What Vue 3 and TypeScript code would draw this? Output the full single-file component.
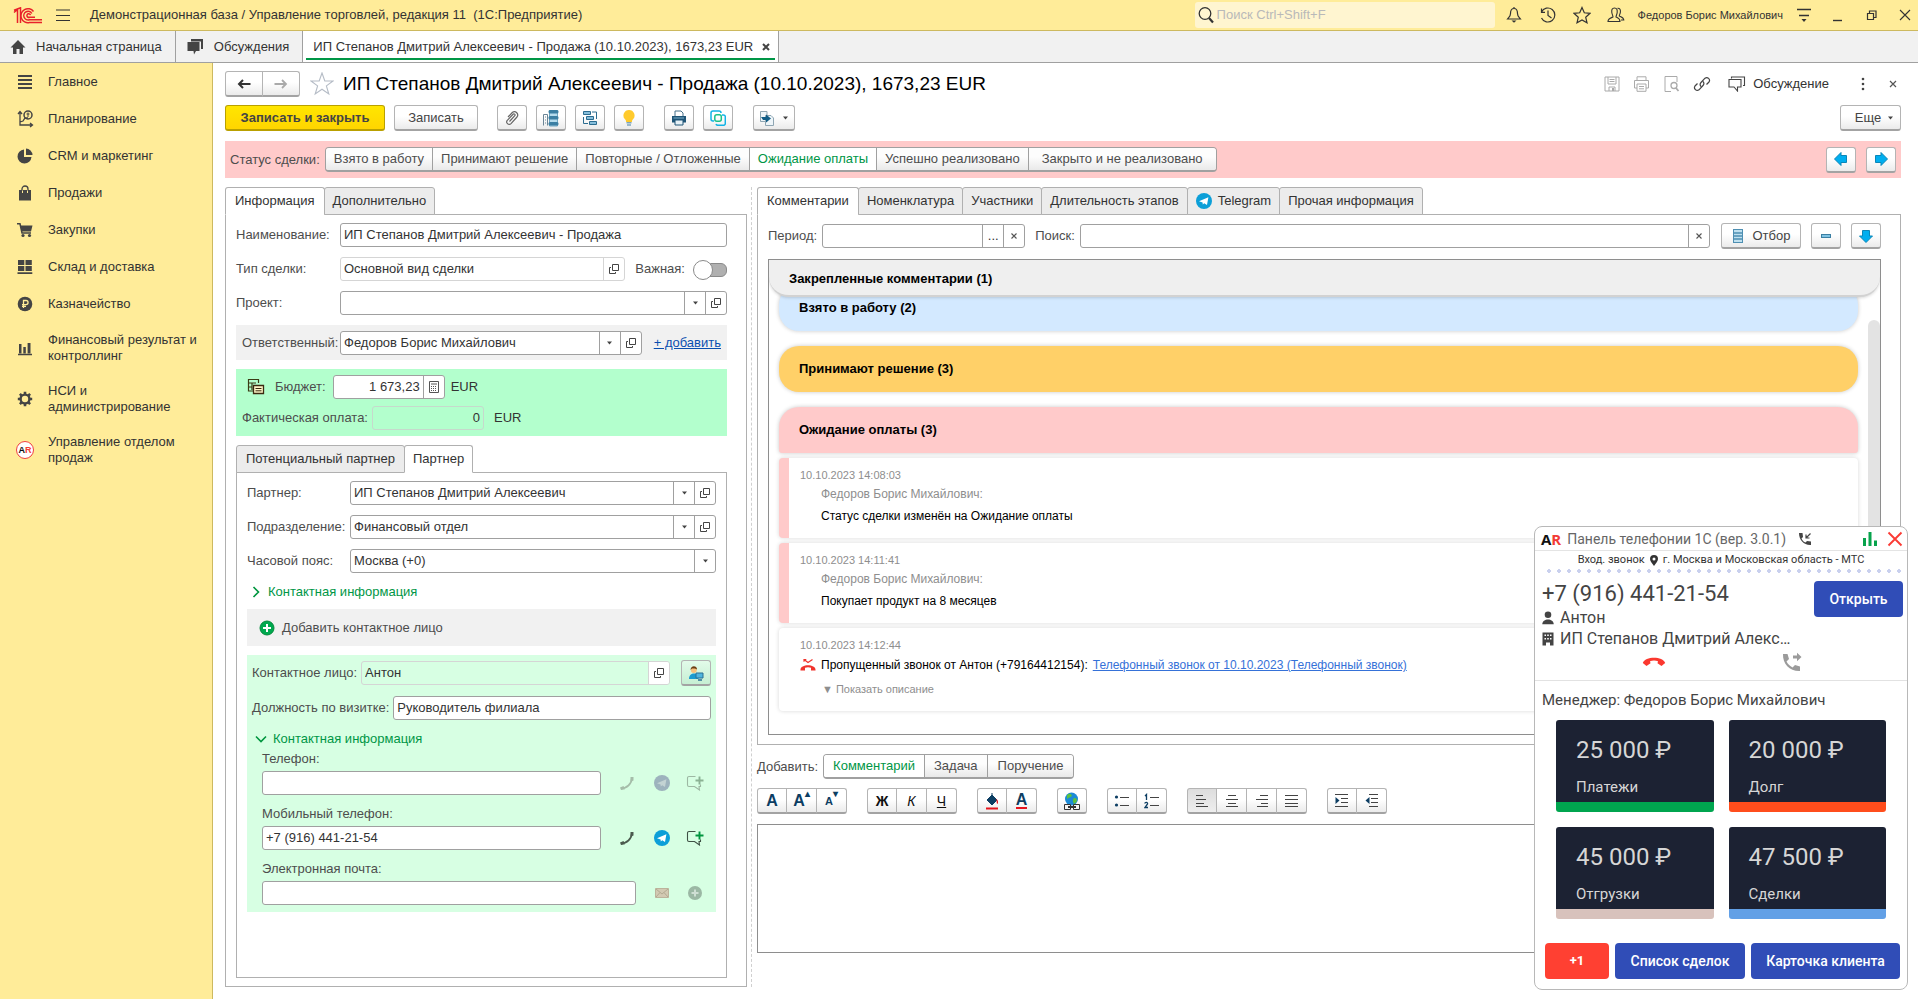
<script setup lang="ts">
import { h, ref } from 'vue'

type IconDef = [number, number, string]

const tg = (a: string, b: string) =>
  `<circle cx="8" cy="8" r="8" fill="${a}"/><path d="M3 8.2 12.4 4.2 11 12 8.2 10.2 6.8 11.6 6.6 9.4Z" fill="${b}"/>`
const arrow = (rot: number) =>
  `<path transform="rotate(${rot} 8 8)" d="M8 1.5 14.5 8H11.5V13.5H4.5V8H1.5Z" fill="#00aeef" stroke="#0b86b8"/>`
const lines = (rows: number[][]) => rows.map(([x, y, w]) => `<path d="M${x} ${y}.5h${w}" stroke="#444"/>`).join('')

const icons: Record<string, IconDef> = {
  logo: [30, 17, '<g fill="none" stroke="#e8212b" stroke-width="1.5"><path d="M1 5.500 4.500 2.500V16M1 3.200 7.500.8V16"/><path d="M20.500 4.500A7 7 0 1 0 16.500 15.500H29"/><path d="M18.800 6.500A4.300 4.300 0 1 0 16.500 12.700H29"/><path d="M17.500 8.200A1.800 1.800 0 1 0 16.500 10.200H22"/></g>'],
  burger: [16, 14, '<path d="M0 2h14M0 7.500h14M0 12.500h14" stroke="#333" stroke-width="1.200"/>'],
  home: [16, 16, '<path d="M8 1 0.500 8.500H3V15H6.500V10H9.500V15H13V8.500H15.500Z" fill="#444"/>'],
  chat: [18, 16, '<path d="M5 0H17V10H15V2.500H5Z" fill="#444"/><path d="M1.500 3H13.500V12H10L8 15.500 7.500 12H1.500Z" fill="#444"/>'],
  list: [16, 16, '<path d="M1 2h14M1 6h14M1 10h14M1 14h14" stroke="#444" stroke-width="2"/>'],
  plan: [18, 18, '<path d="M4 2V15H16M2 4 4 1.500 6 4M14 13 16.500 15 14 17M4 12l3-1 2-3h3" fill="none" stroke="#444" stroke-width="1.300"/><circle cx="12" cy="5" r="4" fill="none" stroke="#444" stroke-width="1.500"/><path d="M12 2.500V7M10.500 4h3" stroke="#444"/>'],
  pie: [16, 16, '<path d="M7 1.500V9H14.500A7 7 0 1 1 7 1.500Z" fill="#444"/><path d="M9 .5A7 7 0 0 1 15.500 7H9Z" fill="#444"/>'],
  bag: [16, 16, '<path d="M2 5H14V15.500H2Z" fill="#444"/><path d="M5 8V4a3 3 0 0 1 6 0V8" fill="none" stroke="#444" stroke-width="1.300"/><path d="M5.500 5.500V8M10.500 5.500V8" stroke="#ffec99"/>'],
  cart: [16, 16, '<path d="M0 1.800H3L5 11H14" fill="none" stroke="#444" stroke-width="1.500"/><path d="M3.300 3.500H15.500L14 9.500H4.500Z" fill="#444"/><circle cx="6" cy="13.500" r="1.600" fill="#444"/><circle cx="12.500" cy="13.500" r="1.600" fill="#444"/>'],
  boxes: [16, 16, '<path d="M1 1H7.300V6H1ZM8.500 1H14.800V6H8.500ZM1 7H7.300V12H1ZM8.500 7H14.800V12H8.500ZM.5 13.300H15.300V15H.5Z" fill="#444"/>'],
  ruble: [16, 16, '<circle cx="8" cy="8" r="7.300" fill="#444"/><path d="M6.500 12V4.500H9A2 2 0 0 1 9 8.600H5M5 10.400H9" fill="none" stroke="#ffec99" stroke-width="1.300"/>'],
  bars: [16, 16, '<path d="M1 14.500h14" stroke="#444" stroke-width="1.500"/><path d="M2 4H4.500V13.500H2ZM6.300 7H8.800V13.500H6.300ZM10.600 3H13.500V13.500H10.600Z" fill="#444"/>'],
  gear: [16, 16, '<circle cx="8" cy="8" r="4.400" fill="none" stroke="#444" stroke-width="2.400"/><path d="M8 .8V3.500M8 12.500V15.200M.8 8H3.500M12.500 8H15.200M2.900 2.900 4.800 4.800M11.200 11.200 13.100 13.100M13.100 2.900 11.200 4.800M4.800 11.200 2.900 13.100" stroke="#444" stroke-width="2.600"/>'],
  search: [16, 18, '<circle cx="7" cy="7.500" r="5.800" fill="none" stroke="#333" stroke-width="1.300"/><path d="M11 12 15 16.500" stroke="#333" stroke-width="2.200"/>'],
  bell: [16, 18, '<path d="M8 2.500C5.500 2.500 4.500 4.500 4.500 7.500 4.500 10.500 3 11 1.500 13H14.500C13 11 11.500 10.500 11.500 7.500 11.500 4.500 10.500 2.500 8 2.500ZM8 2.500V1" fill="none" stroke="#333" stroke-width="1.200"/><path d="M5.500 14.500H10.500L8 16.800Z" fill="#333"/>'],
  history: [18, 18, '<path d="M2.500 6A7 7 0 1 1 2.500 12M2.500 2.500V6.300H6M9 4.500V9.500L12.500 12" fill="none" stroke="#333" stroke-width="1.200"/>'],
  star: [18, 18, '<path d="M9 1.500 11.300 6.800 17 7.300 12.700 11.200 14 16.800 9 13.900 4 16.800 5.300 11.200 1 7.300 6.700 6.800Z" fill="none" stroke="#333" stroke-width="1.200"/>'],
  bigstar: [24, 24, '<path d="M12 1 14.800 9H23L16.400 13.900 18.800 22 12 17.200 5.200 22 7.600 13.900 1 9H9.200Z" fill="none" stroke="#b5bcc6" stroke-width="1.100"/>'],
  users: [18, 18, '<path d="M7.500 2C5 2 4.500 4 4.800 6.500 5.200 9 6 9.500 6 11 3.500 12 1 12.500 1 15.500H13C13 12.500 11 12 9 11 9 9.500 10 8.500 10.200 6.500 10.400 4 10 2 7.500 2ZM10.500 2.200C13 2 13.600 4 13.400 6 13.200 8 12.300 8.800 12.300 10 14.500 11 16.800 11.500 16.800 14H14" fill="none" stroke="#333" stroke-width="1.100"/>'],
  funnelmenu: [16, 16, '<path d="M1 2.500H15M3 8.500H13" stroke="#333" stroke-width="1.300"/><path d="M5.500 12H10.500L8 15Z" fill="#333"/>'],
  min: [12, 14, '<path d="M1 12.500H10" stroke="#333" stroke-width="1.400"/>'],
  restore: [12, 12, '<path d="M1.500 4.500H7.500V10.500H1.500ZM3.500 4V2H10V8.500H8" fill="none" stroke="#333" stroke-width="1.200"/>'],
  cross: [12, 12, '<path d="M1 1 11 11M11 1 1 11" stroke="#333" stroke-width="1.100"/>'],
  smallx: [8, 8, '<path d="M1 1 7 7M7 1 1 7" stroke="#555" stroke-width="1.200"/>'],
  tinyx: [6, 6, '<path d="M.5.5 5.500 5.500M5.500.5.5 5.500" stroke="#555" stroke-width="1.100"/>'],
  boldx: [8, 8, '<path d="M1 1 7 7M7 1 1 7" stroke="#444" stroke-width="2"/>'],
  left: [14, 12, '<path d="M13.500 6H2M6 2 2 6 6 10" fill="none" stroke="#333" stroke-width="2"/>'],
  right: [14, 12, '<path d="M.5 6H12M8 2 12 6 8 10" fill="none" stroke="#aaa" stroke-width="1.800"/>'],
  save: [16, 16, '<path d="M1 1H15V15H1ZM4 1V8H12V1M5.500 3.500H10.500M5.500 5.500H10.500M5 15V11H11V15" fill="none" stroke="#aaa"/><path d="M8 12H10V15H8Z" fill="#aaa"/>'],
  printer: [18, 16, '<path d="M4 4V.8H13V4M4 12H1.500V4.500H15.500V12H13M4 8H13V15.300H4ZM6 10.500H11M6 12.800H11" fill="none" stroke="#aaa"/>'],
  preview: [16, 16, '<path d="M7 15.500H1V.5H13V6" fill="none" stroke="#aaa"/><circle cx="10" cy="9.500" r="3" fill="none" stroke="#aaa" stroke-width="1.300"/><path d="M12 12 14.500 15" stroke="#aaa" stroke-width="1.800"/>'],
  link: [18, 18, '<path d="M8 11.500A3 3 0 0 1 8 7.500L12 3.200A2.800 2.800 0 0 1 16 7L13.500 9.500M10 6.500A3 3 0 0 1 10 10.500L6 14.800A2.800 2.800 0 0 1 2 11L4.500 8.500" fill="none" stroke="#444" stroke-width="1.200"/>'],
  talk: [18, 16, '<path d="M3.500 2.500V1H16.500V9.500H15M1 3.500H13V11H9.500V15L6 11H1Z" fill="none" stroke="#444" stroke-width="1.100"/>'],
  dots: [4, 16, '<circle cx="2" cy="3" r="1.300" fill="#444"/><circle cx="2" cy="8" r="1.300" fill="#444"/><circle cx="2" cy="13" r="1.300" fill="#444"/>'],
  clip: [16, 16, '<path d="M5.500 11.500 11 5.500A1.200 1.200 0 0 0 9.300 4L3.500 10.200A2.400 2.400 0 0 0 7 13.700L13 7A3.300 3.300 0 0 0 8.500 2.300L4 7" fill="none" stroke="#666" stroke-width="1.200"/>'],
  server: [18, 18, '<path d="M1.500 16.500V5.500H5.500V16.500" fill="none" stroke="#6b8596"/><path d="M3 8H4M3 11H4M3 14H4" stroke="#6b8596"/><path d="M7.500 1.500H15.500V17H7.500Z" fill="#b5dbec" stroke="#6fa6c2"/><rect x="6.500" y="1" width="10" height="3.500" rx="1.500" fill="#3b7fa3"/><rect x="6.500" y="7" width="10" height="3.500" rx="1.500" fill="#3b7fa3"/><rect x="6.500" y="13" width="10" height="3.500" rx="1.500" fill="#3b7fa3"/>'],
  tree: [16, 16, '<path d="M1.500 1.500H8.500V4.500H1.500ZM4.500 6.500H11.500V9.500H4.500ZM7.500 11.500H14.500V14.500H7.500Z" fill="#86bedb" stroke="#2b6c90"/><path d="M10 2H14.500V9M1.500 7V13.500H6" fill="none" stroke="#2b6c90"/>'],
  bulb: [16, 16, '<path d="M8 0A5.500 5.500 0 0 1 12 9.300C11 10.300 11 11 11 12H5C5 11 5 10.300 4 9.300A5.500 5.500 0 0 1 8 0Z" fill="#ffca2c"/><path d="M5.500 12.800H10.500M6 15H10" stroke="#7da4bb" stroke-width="1.500"/>'],
  print2: [16, 16, '<path d="M4 6V1H10L12 3V6" fill="#fff" stroke="#47708a"/><path d="M1 6H15V12.500H1Z" fill="#1f5577"/><path d="M4 10H12V15H4Z" fill="#e6f1f7" stroke="#1f5577"/><path d="M2.500 8H13" stroke="#7fb0cb"/>'],
  frames: [16, 16, '<path d="M4 11H3A2 2 0 0 1 1 9V3A2 2 0 0 1 3 1H9A2 2 0 0 1 11 3M12 5H13.500A1.800 1.800 0 0 1 15.300 6.800V13.500A1.800 1.800 0 0 1 13.500 15.300H8A2 2 0 0 1 6 14" fill="none" stroke="#12b3e6" stroke-width="1.500"/><rect x="4.800" y="4.800" width="6.500" height="6.500" rx="2" fill="none" stroke="#1cc28a" stroke-width="1.500"/>'],
  copydoc: [16, 16, '<path d="M1.500 1.500H8V11.500H1.500ZM6.500 5.500H12L14.500 8V15.500H6.500Z" fill="#eef5f9" stroke="#8fa6b3"/><path d="M2 7H7V4.500L12 8.500 7 12.500V10H4Z" fill="#0f5c86"/>'],
  caret: [7, 4, '<path d="M1 .5H6L3.500 3.500Z" fill="#444"/>'],
  aleft: [16, 16, arrow(-90)],
  aright: [16, 16, arrow(90)],
  adown: [16, 16, arrow(180)],
  minus: [16, 16, '<rect x="3.500" y="6.500" width="9" height="3" fill="#7fc3e3" stroke="#3b7fa3"/>'],
  filter: [12, 16, '<rect x="1.500" y="1.500" width="9" height="13" fill="#bfe0ef" stroke="#4e8fb2"/><path d="M1 5H11M1 8H11M1 11H11" stroke="#4e8fb2" stroke-width="1.400"/>'],
  open: [12, 12, '<path d="M4.500 1.500H10.500V7.500H4.500ZM3 4.500H1.500V10.500H7.500V9" fill="none" stroke="#444"/>'],
  calc: [12, 12, '<path d="M1.500.5H10.500V11.500H1.500ZM3 3H9" fill="none" stroke="#555"/><path d="M3 5.500H9M3 7.500H9M3 9.500H9" stroke="#555" stroke-dasharray="1 1"/>'],
  money: [18, 18, '<path d="M6 13H1.500V1.500H11.500V5M1.500 5H9M5 5V12M1.500 9H5" fill="none" stroke="#3b3b14" stroke-width="1.200"/><path d="M6.500 7.500H16.500V15.500H6.500Z" fill="#fff7c8" stroke="#3b2a10" stroke-width="1.300"/><path d="M8.500 10.500H14.500M8.500 12.800H14.500" stroke="#3b2a10"/>'],
  plus: [16, 16, '<circle cx="8" cy="8" r="7" fill="#00a94f" stroke="#068a3c"/><path d="M8 4V12M4 8H12" stroke="#fff" stroke-width="2"/>'],
  plusoff: [16, 16, '<circle cx="8" cy="8" r="7" fill="#9bb8a4"/><path d="M8 4.500V11.500M4.500 8H11.500" stroke="#cfdfd4" stroke-width="2"/>'],
  person: [16, 16, '<path d="M1 14C1 10 3.500 8.500 6 8.500S10 10 10.500 14Z" fill="#1b9bd0"/><circle cx="5.800" cy="5" r="3" fill="#f6c17d"/><path d="M2.500 5C2.500 0 9 0 9 4.500L7 3.500 4 3.500Z" fill="#6b3f14"/><path d="M8 8H15V13H8Z" fill="#4fb5df" stroke="#2a6e93"/><path d="M10 15H14" stroke="#2a6e93" stroke-width="1.500"/>'],
  phone: [16, 16, '<path d="M2 13.500C8 13.300 12.500 9 13 3" fill="none" stroke="#4b5a4e" stroke-width="1.900"/><path d="M1 12.500 4.500 11 6 14.200 2 15ZM11.500 2H14.500V5.500L11.500 6.500Z" fill="#4b5a4e"/>'],
  phoneoff: [16, 16, '<path d="M2 13.500C8 13.300 12.500 9 13 3" fill="none" stroke="#a5bda9" stroke-width="1.900"/><path d="M1 12.500 4.500 11 6 14.200 2 15ZM11.500 2H14.500V5.500L11.500 6.500Z" fill="#a5bda9"/>'],
  tg: [16, 16, tg('#0c9fd8', '#fff')],
  tgoff: [16, 16, tg('#9db3bd', '#c3d3d3')],
  addmsg: [18, 16, '<path d="M9.500 1.500H3A1.500 1.500 0 0 0 1.500 3V10A1.500 1.500 0 0 0 3 11.500H8.500L13.500 15 13 11.500H14.500V9.500" fill="none" stroke="#3f5145" stroke-width="1.100"/><path d="M13.500 1.500V9.500M9.500 5.500H17.500" stroke="#00963f" stroke-width="1.900"/>'],
  addmsgoff: [18, 16, '<path d="M9.500 1.500H3A1.500 1.500 0 0 0 1.500 3V10A1.500 1.500 0 0 0 3 11.500H8.500L13.500 15 13 11.500H14.500V9.500" fill="none" stroke="#9db8a3" stroke-width="1.100"/><path d="M13.500 1.500V9.500M9.500 5.500H17.500" stroke="#8bb294" stroke-width="1.900"/>'],
  mail: [16, 12, '<path d="M1.500 1.500H14.500V10.500H1.500Z" fill="#d2c9b2" stroke="#bcb39b"/><path d="M2 2 8 7 14 2M2 10 6 5.500M14 10 10 5.500" fill="none" stroke="#b3aa92"/>'],
  chevr: [8, 12, '<path d="M1.500 1 6.500 6 1.500 11" fill="none" stroke="#00963f" stroke-width="1.600"/>'],
  chevd: [12, 8, '<path d="M1 1.500 6 6.500 11 1.500" fill="none" stroke="#00963f" stroke-width="1.600"/>'],
  missed: [16, 14, '<path d="M.5 12.500C-.5 5.500 16.500 5.500 15.500 12.500H11V9.800C9 9 7 9 5 9.800V12.500Z" fill="#f0332c"/><path d="M4 1.500 8 4.500 12.500 1.500M4 3.800V1.500H6.300" fill="none" stroke="#f0332c" stroke-width="1.200"/>'],
  bucket: [16, 18, '<path d="M8 3 13 8 8 13 3 8Z" fill="#0d3e63" stroke="#0d3e63"/><path d="M8 1V6" stroke="#0d3e63"/><path d="M12 7C15 8 14 12 13.500 12 12.500 12 13 9 12 7Z" fill="#e5141d"/><path d="M2 16.500H14" stroke="#e5141d" stroke-width="2"/>'],
  globe: [16, 18, '<circle cx="7.500" cy="7" r="6.500" fill="#1c8ad6"/><path d="M3 3C6 .5 7 2 8 3.500 7 6 4 5 3 7.500ZM10 6C12.500 6 13.500 7 12.500 10L10 12C9 10 8 8 10 6Z" fill="#5cc23e"/><path d="M.5 12.500H6.500V17.500H.5ZM9.500 12.500H15.500V17.500H9.500Z" fill="#f5f5f5" stroke="#333"/><path d="M4 15H12" stroke="#333" stroke-width="2"/>'],
  ul: [16, 16, '<circle cx="2.500" cy="4" r="1.600" fill="#0d3e63"/><circle cx="2.500" cy="12" r="1.600" fill="#0d3e63"/><path d="M6 4.500H15M6 12.500H15" stroke="#444"/>'],
  ol: [16, 16, '<path d="M1 3 2.500 1.500V7M.8 10.500C1 9 4 9 3.500 11L1 14.500H4" fill="none" stroke="#0d3e63" stroke-width="1.300"/><path d="M6 4.500H15M6 12.500H15" stroke="#444"/>'],
  alL: [16, 16, lines([[2, 2, 7], [2, 6, 10], [2, 10, 8], [2, 13, 12]])],
  alC: [16, 16, lines([[4, 2, 8], [2, 6, 12], [4, 10, 8], [2, 13, 12]])],
  alR: [16, 16, lines([[6, 2, 8], [2, 6, 12], [7, 10, 7], [3, 13, 11]])],
  alJ: [16, 16, lines([[1, 2, 13], [1, 6, 13], [1, 10, 13], [1, 13, 13]])],
  ind: [16, 16, lines([[1, 1, 13], [7, 5, 7], [7, 9, 7], [1, 13, 13]]) + '<path d="M1.500 4V11L5.500 7.500Z" fill="#0d3e63"/>'],
  outd: [16, 16, lines([[5, 1, 9], [7, 5, 7], [7, 9, 7], [5, 13, 9]]) + '<path d="M5.500 4V11L1.500 7.500Z" fill="#0d3e63"/>'],
  callin: [14, 14, '<path d="M1 1H4.500L5 5 3.500 6.500C4.500 9 6 10 7.500 10.500L9 9 13 9.500V13C6 13.500 1 8 1 1Z" fill="#444"/><path d="M12.500 1.500 8 6M8 2.500V6H11.500" fill="none" stroke="#444" stroke-width="1.200"/>'],
  chart: [16, 16, '<path d="M1 7H4V15H1ZM6.500 1H9.500V15H6.500ZM12 9.500H15V15H12Z" fill="#07a34c"/>'],
  redx: [16, 16, '<path d="M1.500 1.500 14.500 14.500M14.500 1.500 1.500 14.500" stroke="#fb3b35" stroke-width="1.900"/>'],
  pin: [8, 11, '<path d="M4 0A4 4 0 0 1 8 4C8 6.500 5.500 8.500 4 11 2.500 8.500 0 6.500 0 4A4 4 0 0 1 4 0ZM4 2.500A1.500 1.500 0 1 0 4 5.500 1.500 1.500 0 0 0 4 2.500Z" fill="#333"/>'],
  man: [12, 14, '<circle cx="6" cy="3.800" r="3.300" fill="#444"/><path d="M.3 13.300C.3 7 11.700 7 11.700 13.300Z" fill="#444"/>'],
  house: [12, 14, '<path fill-rule="evenodd" d="M.5.5H11.500V13.500H8V10.500H4V13.500H.5ZM2.500 2.500V4H4V2.500ZM5.200 2.500V4H6.800V2.500ZM8 2.500V4H9.500V2.500ZM2.500 6V7.500H4V6ZM5.200 6V7.500H6.800V6ZM8 6V7.500H9.500V6Z" fill="#444"/>'],
  hangup: [24, 10, '<path d="M.8 6C3-1 21-1 23.200 6L19.500 9 15.500 6.300 16 4.200C13.500 3.400 10.500 3.400 8 4.200L8.500 6.300 4.500 9Z" fill="#fb382f"/>'],
  forward: [20, 20, '<path d="M1 2H5.500L7 7 4.500 9.500C6 12.500 8 14 10.500 15.500L13 13 18 14.500V19C8 19.500 .5 12 1 2Z" fill="#9b9b9b"/><path d="M11 3.500H15V.8L19.500 5 15 9.200V6.500H11Z" fill="#9b9b9b"/>'],
}

const Ico = (p: { n: string }) => {
  const [w, ht, body] = icons[p.n]
  return h('svg', { width: w, height: ht, viewBox: `0 0 ${w} ${ht}`, 'aria-hidden': 'true', innerHTML: body })
}
Ico.props = ['n']

const nav = [
  ['list', 'Главное'],
  ['plan', 'Планирование'],
  ['pie', 'CRM и маркетинг'],
  ['bag', 'Продажи'],
  ['cart', 'Закупки'],
  ['boxes', 'Склад и доставка'],
  ['ruble', 'Казначейство'],
  ['bars', 'Финансовый результат и контроллинг'],
  ['gear', 'НСИ и администрирование'],
  ['ar', 'Управление отделом продаж'],
]
const statuses = ['Взято в работу', 'Принимают решение', 'Повторные / Отложенные', 'Ожидание оплаты', 'Успешно реализовано', 'Закрыто и не реализовано']
const status = ref('Ожидание оплаты')
const rightTabs = ['Комментарии', 'Номенклатура', 'Участники', 'Длительность этапов', 'Telegram', 'Прочая информация']
const addKinds = ['Комментарий', 'Задача', 'Поручение']
const addKind = ref('Комментарий')
const name = ref('ИП Степанов Дмитрий Алексеевич - Продажа')
const position = ref('Руководитель филиала')
const mobile = ref('+7 (916) 441-21-54')
const important = ref(false)
const comments = [
  ['10.10.2023 14:08:03', 'Статус сделки изменён на Ожидание оплаты'],
  ['10.10.2023 14:11:41', 'Покупает продукт на 8 месяцев'],
]
const totals = [
  { sum: '25 000 ₽', label: 'Платежи', kind: 'paid' },
  { sum: '20 000 ₽', label: 'Долг', kind: 'debt' },
  { sum: '45 000 ₽', label: 'Отгрузки', kind: 'shipped' },
  { sum: '47 500 ₽', label: 'Сделки', kind: 'deals' },
]
const topIcons = [['bell', 'Уведомления'], ['history', 'История'], ['star', 'Избранное'], ['users', 'Пользователи']]
const docIcons = [['save', 'Сохранить'], ['printer', 'Печать'], ['preview', 'Просмотр'], ['link', 'Ссылка']]
const editorRest = [['ul', 'ol'], ['alL', 'alC', 'alR', 'alJ'], ['ind', 'outd']]
</script>

<template>
  <div class="app">
    <header class="top">
      <Ico n="logo" class="logo" />
      <button class="bare" aria-label="Меню"><Ico n="burger" /></button>
      <span class="apptitle">Демонстрационная база / Управление торговлей, редакция 11&nbsp; (1С:Предприятие)</span>
      <label class="search"><Ico n="search" /><input type="search" placeholder="Поиск Ctrl+Shift+F" aria-label="Поиск" /></label>
      <div class="topicons">
        <button v-for="i in topIcons" :key="i[0]" class="bare" :aria-label="i[1]"><Ico :n="i[0]" /></button>
      </div>
      <span class="user">Федоров Борис Михайлович</span>
      <div class="win">
        <button class="bare" aria-label="Настройки"><Ico n="funnelmenu" /></button>
        <button class="bare" aria-label="Свернуть"><Ico n="min" /></button>
        <button class="bare" aria-label="Развернуть"><Ico n="restore" /></button>
        <button class="bare" aria-label="Закрыть"><Ico n="cross" /></button>
      </div>
    </header>

    <nav class="wintabs">
      <a href="#"><Ico n="home" />Начальная страница</a>
      <a href="#"><Ico n="chat" />Обсуждения</a>
      <a href="#" class="cur">ИП Степанов Дмитрий Алексеевич - Продажа (10.10.2023), 1673,23 EUR<Ico n="boldx" /></a>
    </nav>

    <div class="body">
      <nav class="side">
        <a v-for="n in nav" :key="n[1]" href="#">
          <span class="si"><span v-if="n[0] === 'ar'" class="arlogo"><b>A</b><b class="r">R</b></span><Ico v-else :n="n[0]" /></span>
          <span>{{ n[1] }}</span>
        </a>
      </nav>

      <main class="main">
        <div class="titlebar">
          <div class="group nav2">
            <button class="btn" aria-label="Назад"><Ico n="left" /></button>
            <button class="btn" aria-label="Вперед"><Ico n="right" /></button>
          </div>
          <button class="bare" aria-label="В избранное"><Ico n="bigstar" /></button>
          <h1>ИП Степанов Дмитрий Алексеевич - Продажа (10.10.2023), 1673,23 EUR</h1>
          <div class="docicons">
            <button v-for="i in docIcons" :key="i[0]" class="bare" :aria-label="i[1]"><Ico :n="i[0]" /></button>
          </div>
          <button class="bare talk"><Ico n="talk" />Обсуждение</button>
          <button class="bare dots" aria-label="Ещё действия"><Ico n="dots" /></button>
          <button class="bare" aria-label="Закрыть документ"><Ico n="smallx" /></button>
        </div>

        <div class="cmds">
          <button class="btn primary">Записать и закрыть</button>
          <button class="btn write">Записать</button>
          <div class="cg">
            <button class="btn ib" aria-label="Файлы"><Ico n="clip" /></button>
            <button class="btn ib" aria-label="Отчеты"><Ico n="server" /></button>
            <button class="btn ib" aria-label="Структура"><Ico n="tree" /></button>
            <button class="btn ib" aria-label="Подсказка"><Ico n="bulb" /></button>
          </div>
          <div class="cg">
            <button class="btn ib" aria-label="Печать документа"><Ico n="print2" /></button>
            <button class="btn ib" aria-label="Копии"><Ico n="frames" /></button>
          </div>
          <button class="btn based" aria-label="Создать на основании"><Ico n="copydoc" /><Ico n="caret" /></button>
          <button class="btn more">Еще<Ico n="caret" /></button>
        </div>

        <div class="statusbar">
          <span class="lbl">Статус сделки:</span>
          <div class="seg">
            <button v-for="s in statuses" :key="s" :class="{ on: s === status }" @click="status = s">{{ s }}</button>
          </div>
          <button class="btn ib first" aria-label="Предыдущий этап"><Ico n="aleft" /></button>
          <button class="btn ib" aria-label="Следующий этап"><Ico n="aright" /></button>
        </div>

        <div class="split">
          <section class="left">
            <div class="tabs"><button class="tab on">Информация</button><button class="tab">Дополнительно</button></div>
            <div class="panel lp">
              <div class="row"><label for="f-name">Наименование:</label><div class="field"><input id="f-name" v-model="name" /></div></div>
              <div class="row">
                <label for="f-type">Тип сделки:</label>
                <div class="field soft"><input id="f-type" value="Основной вид сделки" readonly /><button aria-label="Открыть вид"><Ico n="open" /></button></div>
                <label class="imp">Важная:<input v-model="important" type="checkbox" class="toggle" /></label>
              </div>
              <div class="row">
                <label for="f-proj">Проект:</label>
                <div class="field"><select id="f-proj"><option></option></select><span class="dd"><Ico n="caret" /></span><button aria-label="Открыть проект"><Ico n="open" /></button></div>
              </div>
              <div class="row resp">
                <label for="f-resp">Ответственный:</label>
                <div class="field"><select id="f-resp"><option>Федоров Борис Михайлович</option></select><span class="dd"><Ico n="caret" /></span><button aria-label="Открыть ответственного"><Ico n="open" /></button></div>
                <a href="#">+ добавить</a>
              </div>
              <div class="money">
                <div class="mrow">
                  <Ico n="money" class="mi" /><label for="f-bud">Бюджет:</label>
                  <div class="field num"><input id="f-bud" value="1 673,23" /><button aria-label="Калькулятор"><Ico n="calc" /></button></div>EUR
                </div>
                <div class="mrow fact">
                  <label for="f-fact">Фактическая оплата:</label>
                  <div class="field num clear"><input id="f-fact" value="0" readonly /></div>EUR
                </div>
              </div>

              <div class="tabs"><button class="tab">Потенциальный партнер</button><button class="tab on">Партнер</button></div>
              <div class="panel ip">
                <div class="row r2"><label for="p1">Партнер:</label><div class="field"><select id="p1"><option>ИП Степанов Дмитрий Алексеевич</option></select><span class="dd"><Ico n="caret" /></span><button aria-label="Открыть партнера"><Ico n="open" /></button></div></div>
                <div class="row r2"><label for="p2">Подразделение:</label><div class="field"><select id="p2"><option>Финансовый отдел</option></select><span class="dd"><Ico n="caret" /></span><button aria-label="Открыть подразделение"><Ico n="open" /></button></div></div>
                <div class="row r2"><label for="p3">Часовой пояс:</label><div class="field"><select id="p3"><option>Москва (+0)</option></select><span class="dd"><Ico n="caret" /></span></div></div>
                <button class="bare fold"><Ico n="chevr" />Контактная информация</button>
                <button class="addc"><Ico n="plus" />Добавить контактное лицо</button>
                <div class="contact">
                  <div class="crow">
                    <label for="c1">Контактное лицо:</label>
                    <div class="field soft mint"><input id="c1" value="Антон" readonly /><button aria-label="Открыть контакт"><Ico n="open" /></button></div>
                    <button class="btn ib cardbtn" aria-label="Карточка контакта"><Ico n="person" /></button>
                  </div>
                  <div class="crow"><label for="c2">Должность по визитке:</label><div class="field"><input id="c2" v-model="position" /></div></div>
                  <button class="bare fold in"><Ico n="chevd" />Контактная информация</button>
                  <div class="ci">
                    <label for="c3">Телефон:</label>
                    <div class="cirow">
                      <div class="field"><input id="c3" type="tel" /></div>
                      <button class="bare" aria-label="Позвонить" disabled><Ico n="phoneoff" /></button>
                      <button class="bare" aria-label="Telegram" disabled><Ico n="tgoff" /></button>
                      <button class="bare" aria-label="Сообщение" disabled><Ico n="addmsgoff" /></button>
                    </div>
                    <label for="c4">Мобильный телефон:</label>
                    <div class="cirow">
                      <div class="field"><input id="c4" v-model="mobile" type="tel" /></div>
                      <button class="bare" aria-label="Позвонить на мобильный"><Ico n="phone" /></button>
                      <button class="bare" aria-label="Написать в Telegram"><Ico n="tg" /></button>
                      <button class="bare" aria-label="Написать сообщение"><Ico n="addmsg" /></button>
                    </div>
                    <label for="c5">Электронная почта:</label>
                    <div class="cirow">
                      <div class="field"><input id="c5" type="email" /></div>
                      <button class="bare" aria-label="Написать письмо" disabled><Ico n="mail" /></button>
                      <button class="bare" aria-label="Добавить адрес" disabled><Ico n="plusoff" /></button>
                    </div>
                  </div>
                </div>
              </div>
            </div>
          </section>

          <section class="right">
            <div class="tabs">
              <button v-for="(t, i) in rightTabs" :key="t" class="tab" :class="{ on: i === 0 }"><Ico v-if="t === 'Telegram'" n="tg" />{{ t }}</button>
            </div>
            <div class="panel rp">
              <div class="filters">
                <label for="q1">Период:</label>
                <div class="field period"><input id="q1" /><button aria-label="Выбрать период">...</button><button aria-label="Очистить период"><Ico n="tinyx" /></button></div>
                <label for="q2">Поиск:</label>
                <div class="field grow"><input id="q2" /><button aria-label="Очистить поиск"><Ico n="tinyx" /></button></div>
                <button class="btn otbor"><Ico n="filter" />Отбор</button>
                <button class="btn ib" aria-label="Свернуть все"><Ico n="minus" /></button>
                <button class="btn ib" aria-label="Вниз"><Ico n="adown" /></button>
              </div>
              <div class="feed">
                <div class="pinned">Закрепленные комментарии (1)</div>
                <div class="cards">
                  <div class="stage s1">Взято в работу (2)</div>
                  <div class="stage s2">Принимают решение (3)</div>
                  <div class="stage s3">Ожидание оплаты (3)</div>
                  <article v-for="c in comments" :key="c[0]" class="com striped">
                    <time>{{ c[0] }}</time>
                    <div class="who">Федоров Борис Михайлович:</div>
                    <div class="txt">{{ c[1] }}</div>
                  </article>
                  <article class="com">
                    <time>10.10.2023 14:12:44</time>
                    <div class="call"><Ico n="missed" /><span>Пропущенный звонок от Антон (+79164412154):</span><a href="#">Телефонный звонок от 10.10.2023 (Телефонный звонок)</a></div>
                    <button class="bare show">▼ Показать описание</button>
                  </article>
                </div>
                <div class="thumb"></div>
              </div>
            </div>

            <div class="adds">
              <span class="lbl">Добавить:</span>
              <div class="seg">
                <button v-for="k in addKinds" :key="k" :class="{ on: k === addKind }" @click="addKind = k">{{ k }}</button>
              </div>
            </div>
            <div class="editor">
              <div class="group"><button class="btn ea">A</button><button class="btn ea">A<sup>▴</sup></button><button class="btn ea sm">A<sup>▾</sup></button></div>
              <div class="group"><button class="btn fb">Ж</button><button class="btn fi">К</button><button class="btn fu">Ч</button></div>
              <div class="group"><button class="btn" aria-label="Цвет фона"><Ico n="bucket" /></button><button class="btn ea"><span class="clr">A</span></button></div>
              <div class="group"><button class="btn" aria-label="Ссылка в тексте"><Ico n="globe" /></button></div>
              <div v-for="g in editorRest" :key="g[0]" class="group">
                <button v-for="i in g" :key="i" class="btn" :class="{ pressed: i === 'alL' }" :aria-label="i"><Ico :n="i" /></button>
              </div>
            </div>
            <textarea class="area" aria-label="Текст комментария"></textarea>
          </section>
        </div>
      </main>
    </div>

    <aside class="tel">
      <header class="th">
        <span class="ar">A<span class="r">R</span></span><span class="tt">Панель телефонии 1С (вер. 3.0.1)</span><Ico n="callin" />
        <button class="bare push" aria-label="Статистика"><Ico n="chart" /></button><button class="bare" aria-label="Закрыть панель"><Ico n="redx" /></button>
      </header>
      <div class="where">Вход. звонок <Ico n="pin" /> г. Москва и Московская область - МТС</div>
      <div class="dotline"></div>
      <div class="caller">
        <div class="who2">
          <div class="num2">+7 (916) 441-21-54</div>
          <div class="ln"><Ico n="man" />Антон</div>
          <div class="ln"><Ico n="house" />ИП Степанов Дмитрий Алекс…</div>
        </div>
        <button class="tb">Открыть</button>
      </div>
      <div class="acts"><button class="bare" aria-label="Сбросить"><Ico n="hangup" /></button><button class="bare" aria-label="Переадресовать"><Ico n="forward" /></button></div>
      <div class="mgr">Менеджер: Федоров Борис Михайлович</div>
      <div class="tiles">
        <div v-for="t in totals" :key="t.label" class="tile" :class="t.kind"><div class="sum">{{ t.sum }}</div><div class="cap">{{ t.label }}</div></div>
      </div>
      <footer class="tf"><button class="tb red">+1</button><button class="tb">Список сделок</button><button class="tb card">Карточка клиента</button></footer>
    </aside>
  </div>
</template>

<style>
body { margin: 0; background: #fff; }
</style>

<style scoped>
* { box-sizing: border-box; }
.app { min-height: 100vh; display: flex; flex-direction: column; font: 13px/16px "Liberation Sans", Arial, sans-serif; color: #333; background: #fff; }
button, input, select, textarea { font: inherit; color: inherit; margin: 0; }
svg { display: block; flex: none; }
.bare { border: 0; background: none; padding: 0; display: flex; align-items: center; justify-content: center; cursor: pointer; }

.top { height: 31px; flex: none; display: flex; align-items: center; background: #ffec99; border-bottom: 1px solid #cdb95f; padding: 0 0 0 13px; }
.logo { margin-right: 13px; }
.apptitle { margin-left: 18px; flex: 1; white-space: nowrap; }
.search { width: 300px; height: 26px; background: #fff5d0; border-radius: 3px; display: flex; align-items: center; padding-left: 3px; gap: 3px; }
.search input { flex: 1; min-width: 0; border: 0; background: none; outline: 0; padding: 0; }
.search input::placeholder { color: #b9b9b9; opacity: 1; }
.topicons { display: flex; margin-left: 2px; }
.topicons .bare { width: 34px; height: 26px; }
.user { font-size: 11px; white-space: nowrap; margin-left: 5px; }
.win { display: flex; margin-left: 4px; }
.win .bare { width: 34px; height: 26px; }
.win .bare:last-child { width: 26px; margin-left: 3px; }

.wintabs { height: 32px; flex: none; display: flex; background: #f1f1f1; border-bottom: 1px solid #a0a0a0; }
.wintabs a { display: flex; align-items: center; color: #333; text-decoration: none; border-right: 1px solid #a0a0a0; padding: 0 13px 0 10px; gap: 10px; white-space: nowrap; }
.wintabs .cur { background: #fff; padding: 0 8px 0 10px; gap: 9px; position: relative; }
.wintabs .cur::after { content: ""; position: absolute; left: 3px; right: 3px; bottom: 2px; height: 2px; background: #009646; }

.body { flex: 1; display: flex; }
.side { width: 213px; flex: none; background: #ffec99; border-right: 1px solid #cdb95f; padding-top: 1px; }
.side a { display: flex; align-items: center; min-height: 37px; padding: 9px 8px 10px 16px; gap: 14px; color: #333; text-decoration: none; }
.si { width: 18px; flex: none; display: flex; justify-content: center; }
.arlogo { width: 18px; height: 18px; border-radius: 50%; border: 1px solid #f04040; background: #fff; font-size: 9px; line-height: 16px; color: #111; display: flex; justify-content: center; }
.r { color: #f23b36; }

.main { flex: 1; min-width: 0; display: flex; flex-direction: column; padding: 8px 17px 12px 12px; }
.btn { height: 26px; border: 1px solid #b4b4b4; border-bottom: 2px solid #a3a3a3; border-radius: 3px; background: linear-gradient(#fff 45%, #ebebeb); padding: 0; display: flex; align-items: center; justify-content: center; color: #444; cursor: pointer; }
.ib { width: 30px; flex: none; }
.group { display: flex; }
.group .btn { width: 31px; margin-left: -1px; border-radius: 0; }
.group .btn:first-child { width: 30px; margin-left: 0; border-radius: 3px 0 0 3px; }
.group .btn:last-child { border-radius: 0 3px 3px 0; }
.group .btn:only-child { border-radius: 3px; }
.titlebar { display: flex; align-items: center; height: 26px; }
.nav2 { margin-right: 10px; }
.nav2 .btn, .nav2 .btn:first-child { width: 38px; }
h1 { margin: 0 0 0 9px; font-size: 19px; line-height: 24px; font-weight: 400; color: #000; flex: 1; white-space: nowrap; }
.docicons { display: flex; gap: 12px; }
.docicons .bare { width: 18px; }
.talk { gap: 7px; margin-left: 17px; }
.dots { margin: 0 24px 0 32px; }
.titlebar > .bare:last-child { margin-right: 4px; }

.cmds { display: flex; margin-top: 8px; }
.primary { width: 160px; font-weight: 700; background: linear-gradient(#ffe600, #ffd500); border-color: #b9a000; color: #444; }
.write { width: 84px; margin: 0 19px 0 9px; }
.cg { display: flex; gap: 9px; margin-right: 20px; }
.based { width: 42px; gap: 7px; }
.more { margin-left: auto; width: 61px; gap: 6px; padding-left: 8px; }

.statusbar { margin-top: 10px; height: 37px; display: flex; align-items: center; background: #ffcaca; padding: 0 5px; }
.lbl { color: #4d4d4d; white-space: nowrap; }
.seg { display: flex; height: 25px; border: 1px solid #a0a0a0; border-bottom-width: 2px; border-radius: 4px; overflow: hidden; margin-left: 5px; }
.seg button { border: 0; border-right: 1px solid #a0a0a0; background: linear-gradient(#fdfdfd 40%, #e9e9e9); padding: 0 8px; color: #4d4d4d; white-space: nowrap; }
.seg button:last-child { border-right: 0; padding: 0 13px; }
.seg .on { background: #fff; color: #009646; }
.statusbar .first { margin: 0 10px 0 auto; }

.split { flex: 1; margin-top: 9px; display: grid; grid-template-columns: 522fr 1144fr; gap: 10px; }
.left, .right { min-width: 0; display: flex; flex-direction: column; }
.right { position: relative; }
.right::before { content: ""; position: absolute; left: -6px; top: 0; bottom: 0; border-left: 1px dashed #d0d0d0; }
.tabs { display: flex; height: 28px; position: relative; z-index: 1; margin-bottom: -1px; }
.tab { height: 28px; border: 1px solid #b0b0b0; margin-right: -1px; border-radius: 3px 3px 0 0; background: #ececec; padding: 0 9px; white-space: nowrap; display: flex; align-items: center; gap: 6px; }
.tab + .tab { padding: 0 8px; }
.tab.on { background: #fff; border-bottom-color: #fff; }
.panel { border: 1px solid #b0b0b0; }
.lp { flex: 1; padding: 8px 19px 8px 10px; display: flex; flex-direction: column; }
label { color: #4d4d4d; white-space: nowrap; }
.row { display: flex; align-items: center; margin-bottom: 10px; }
.row > label:first-child { width: 104px; flex: none; }
.field { flex: 1; min-width: 0; height: 24px; display: flex; border: 1px solid #a0a0a0; border-radius: 3px; background: #fff; overflow: hidden; position: relative; color: #333; }
.field input, .field select { flex: 1; min-width: 0; width: 0; border: 0; padding: 0 3px; background: none; outline: 0; appearance: none; }
.field button, .dd { width: 21px; flex: none; border: 0; border-left: 1px solid #a0a0a0; background: none; padding: 0; display: flex; align-items: center; justify-content: center; }
.soft, .soft button { border-color: #d5d5d5; }
.imp { display: flex; align-items: center; gap: 8px; margin-left: 10px; }
.toggle { appearance: none; width: 34px; height: 18px; margin: 0; position: relative; }
.toggle::before { content: ""; position: absolute; left: 4px; right: 0; top: 3px; height: 12px; border-radius: 6px; border: 1px solid #8a8a8a; background: #b0b0b0; }
.toggle::after { content: ""; position: absolute; left: 0; top: 0; width: 18px; height: 18px; border-radius: 50%; border: 1px solid #8a8a8a; background: #fff; }
.resp { background: #f1f1f1; height: 35px; padding: 0 6px; margin-bottom: 9px; }
.row.resp > label:first-child { width: 98px; }
.resp a { margin-left: 12px; color: #0a4fb0; white-space: nowrap; }
.money { background: #b3ffcd; height: 67px; padding: 6px 6px; margin-bottom: 9px; }
.mrow { display: flex; align-items: center; height: 24px; }
.mi { margin: 0 10px 0 5px; }
.num { flex: none; width: 112px; margin: 0 6px 0 7px; }
.num input { text-align: right; }
.fact { margin-top: 7px; }
.clear { background: none; border-color: #c6d9cc; margin: 0 10px 0 4px; }
.ip { flex: 1; padding: 8px 10px; }
.r2 > label:first-child { width: 103px; }
.fold { color: #009646; gap: 8px; height: 18px; margin: 0 0 8px 5px; }
.addc { width: 100%; height: 37px; background: #f1f1f1; border: 0; display: flex; align-items: center; gap: 7px; padding: 0 12px; color: #4d4d4d; margin-bottom: 9px; }
.contact { background: #d7ffe3; padding: 5px 5px 7px; }
.crow { display: flex; align-items: center; height: 26px; gap: 4px; margin-bottom: 9px; }
.mint { background: #d7ffe3; }
.mint button { background: #fff; }
.cardbtn { margin-left: 7px; background: linear-gradient(#e2fbe9, #c6efd3); }
.fold.in { gap: 6px; margin: 0 0 3px 3px; }
.ci { padding-left: 10px; display: flex; flex-direction: column; }
.ci > label { height: 17px; margin-bottom: 3px; }
.cirow { display: flex; align-items: center; margin-bottom: 11px; }
.cirow:last-child { margin-bottom: 0; }
.cirow .field { margin-right: 8px; }
.cirow .bare { width: 35px; }
.cirow .bare:last-child { width: 32px; }

.rp { padding: 8px 19px 9px 10px; }
.filters { display: flex; align-items: center; height: 26px; margin-bottom: 10px; }
.period { flex: none; width: 203px; margin: 0 10px 0 5px; }
.grow { margin: 0 11px 0 5px; }
.otbor { width: 80px; gap: 9px; margin-right: 10px; }
.filters .ib + .ib { margin-left: 10px; }
.feed { border: 1px solid #8e8e8e; position: relative; overflow: hidden; font-size: 12px; color: #000; }
.pinned { height: 37px; background: #efefef; border-bottom: 2px solid #d2d2d2; border-radius: 0 0 20px 20px; padding: 0 20px; font-size: 13px; line-height: 37px; font-weight: 700; position: relative; z-index: 1; box-shadow: 0 1px 3px rgba(0, 0, 0, .15); }
.cards { margin-top: -12px; padding: 0 22px 23px 10px; }
.stage { height: 46px; font-size: 13px; line-height: 46px; padding: 0 20px; font-weight: 700; border-radius: 20px; margin-bottom: 15px; box-shadow: 0 0 4px rgba(0, 0, 0, .22); }
.s1 { background: #d3e9ff; }
.s2 { background: #ffd068; }
.s3 { background: #ffcaca; border-radius: 20px 20px 3px 3px; margin-bottom: 5px; }
.com { min-height: 80px; padding: 10px 20px 0 21px; margin-bottom: 5px; border-radius: 4px; background: #fff; box-shadow: 0 0 4px rgba(0, 0, 0, .16); }
.com:last-child { height: 83px; margin-bottom: 0; }
.striped { border-left: 10px solid #ffcaca; padding-left: 11px; }
time { display: block; font-size: 11px; line-height: 14px; color: #8e8e8e; }
.who { margin: 4px 0 0 21px; color: #8e8e8e; }
.txt { margin: 6px 0 0 21px; }
.call { display: flex; align-items: center; gap: 5px; margin-top: 5px; }
.call a { color: #3571d8; }
.show { font-size: 11px; color: #8e8e8e; margin: 8px 0 0 22px; }
.thumb { position: absolute; right: 0; top: 60px; bottom: 60px; width: 12px; border-radius: 6px; background: #e3e3e3; }

.adds { display: flex; align-items: center; margin-top: 9px; }
.adds .seg button { padding: 0 9px; }
.adds .seg button:last-child { padding: 0 10px; }
.editor { display: flex; gap: 20px; margin-top: 9px; }
.ea { font-weight: 700; color: #0d3e63; font-size: 16px; }
.ea.sm { font-size: 11px; }
.ea sup { font-size: 10px; line-height: 10px; align-self: flex-start; }
.clr { border-bottom: 2px solid #e5141d; line-height: 15px; }
.fb { font-weight: 700; font-size: 14px; color: #111; }
.fi { font-style: italic; font-size: 14px; color: #111; }
.fu { text-decoration: underline; font-size: 14px; color: #111; }
.pressed { background: linear-gradient(#ddd, #eee); }
.area { display: block; width: 100%; height: 129px; margin-top: 10px; border: 1px solid #8e8e8e; resize: none; background: #fff; }

.tel { position: fixed; right: 10px; bottom: 9px; z-index: 5; width: 374px; background: #fff; border: 1px solid #b8b8b8; border-radius: 8px; font-family: Roboto, "Liberation Sans", sans-serif; color: #444; font-size: 16px; line-height: 20px; }
.th { height: 24px; display: flex; align-items: center; padding: 0 4px 0 6px; border-bottom: 1px solid #e4e4e4; }
.ar { font: 700 15px/20px "Open Sans", sans-serif; color: #111; margin-right: 6px; }
.ar .r { color: #f23b36; }
.tt { color: #666; margin-right: 12px; font-size: 14px; }
.push { margin: 0 9px 0 auto; }
.where { display: flex; justify-content: center; align-items: center; gap: 5px; font-size: 11px; line-height: 18px; color: #333; }
.dotline { height: 5px; margin: 0 0 0 9px; background: radial-gradient(circle at 5px 2px, #c9d0ee 2px, transparent 2px) 0 0 / 10px 5px; }
.caller { display: flex; padding: 7px 4px 0 7px; justify-content: space-between; }
.num2 { font-size: 22px; line-height: 26px; }
.ln { display: flex; align-items: center; gap: 6px; height: 21px; }
.who2 { white-space: nowrap; }
.tb { height: 36px; min-width: 89px; border: 0; border-radius: 4px; background: #304db7; color: #fff; font-weight: 500; font-size: 14px; }
.acts { display: flex; height: 32px; padding: 0 105px 6px 107px; justify-content: space-between; align-items: center; border-bottom: 1px solid #e2e2e2; }
.mgr { padding: 9px 7px 10px; font-size: 15px; }
.tiles { display: grid; grid-template-columns: 1fr 1fr; gap: 15px; padding: 0 21px; }
.tile { height: 92px; border-radius: 3px; background: #1c2233; border-bottom: 10px solid; padding: 15px 20px 0; color: #d6d6d6; }
.sum { font-size: 24px; line-height: 30px; }
.cap { font-size: 15px; line-height: 20px; margin-top: 12px; }
.paid { border-color: #00a54f; }
.debt { border-color: #ff4d1c; }
.shipped { border-color: #d8c2bc; }
.deals { border-color: #62a0e6; }
.tf { display: flex; gap: 6px; padding: 24px 7px 10px 10px; }
.tf .tb { flex: 130; min-width: 0; padding: 0; }
.tf .red { flex: 64; background: #ff4032; font-size: 13px; font-weight: 700; }
.tf .card { flex: 149; }
</style>
